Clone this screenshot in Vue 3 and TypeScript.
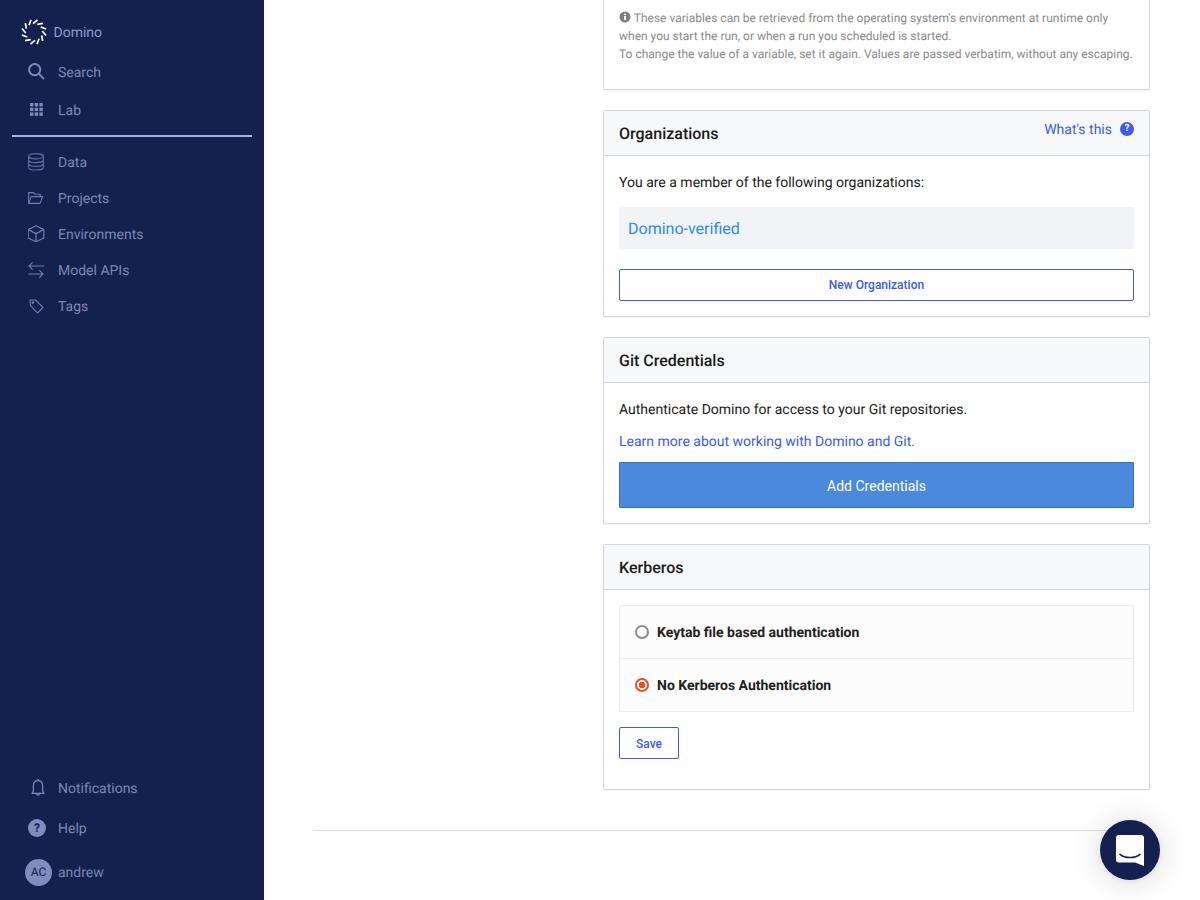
<script setup lang="ts">
const logoTicks = Array.from({ length: 12 }, (_, i) => i * 30);
</script>

<template>
  <div class="page">
    <aside class="sidebar">
      <div class="brand">
        <svg class="logo" width="26" height="26" viewBox="0 0 26 26">
          <g v-for="deg in logoTicks" :key="deg" :transform="`rotate(${deg} 13 13)`">
            <path d="M10 0.9 L8 6.3" stroke="#fff" stroke-width="1.7" fill="none" />
          </g>
        </svg>
        <span class="label">Domino</span>
      </div>
      <nav class="nav-top">
        <a class="nav-item tall">
          <svg width="18" height="18" viewBox="0 0 18 18" fill="none" stroke="#7c89bb" stroke-width="2">
            <circle cx="6.7" cy="6.7" r="5.6" />
            <path d="M10.8 10.8 L15.4 15.4" stroke-linecap="round" />
          </svg>
          <span class="label">Search</span>
        </a>
        <a class="nav-item tall">
          <svg width="18" height="18" viewBox="0 0 18 18" fill="#7c89bb">
            <rect x="2" y="2" width="3.4" height="3.4" />
            <rect x="6.7" y="2" width="3.4" height="3.4" />
            <rect x="11.4" y="2" width="3.4" height="3.4" />
            <rect x="2" y="6.7" width="3.4" height="3.4" />
            <rect x="6.7" y="6.7" width="3.4" height="3.4" />
            <rect x="11.4" y="6.7" width="3.4" height="3.4" />
            <rect x="2" y="11.4" width="3.4" height="3.4" />
            <rect x="6.7" y="11.4" width="3.4" height="3.4" />
            <rect x="11.4" y="11.4" width="3.4" height="3.4" />
          </svg>
          <span class="label">Lab</span>
        </a>
      </nav>
      <div class="nav-rule"></div>
      <nav class="nav-main">
        <a class="nav-item">
          <svg width="18" height="18" viewBox="0 0 18 18" fill="none" stroke="#5f6da3" stroke-width="1.2">
            <ellipse cx="8" cy="3.2" rx="7.4" ry="2.6" />
            <path d="M0.6 3.2 V14.4 C0.6 16 4 17 8 17 C12 17 15.4 16 15.4 14.4 V3.2" />
            <path d="M0.6 7 C0.6 8.6 4 9.6 8 9.6 C12 9.6 15.4 8.6 15.4 7" />
            <path d="M0.6 10.8 C0.6 12.4 4 13.4 8 13.4 C12 13.4 15.4 12.4 15.4 10.8" />
          </svg>
          <span class="label">Data</span>
        </a>
        <a class="nav-item">
          <svg width="18" height="18" viewBox="0 0 18 18" fill="none" stroke="#6f7cb0" stroke-width="1.1" stroke-linejoin="round">
            <path d="M0.6 14.4 V3.6 H5.6 L7 5.2 H12.2 V7.6" />
            <path d="M0.6 14.4 L3.2 7.6 H14.6 L12 14.4 Z" />
          </svg>
          <span class="label">Projects</span>
        </a>
        <a class="nav-item">
          <svg width="18" height="18" viewBox="0 0 18 18" fill="none" stroke="#6f7cb0" stroke-width="1.2" stroke-linejoin="round">
            <path d="M8 0.8 L15.8 4.6 V13 L8 16.8 L0.2 13 V4.6 Z" />
            <path d="M0.2 4.6 L8 8.6 L15.8 4.6 M8 8.6 V16.8" />
          </svg>
          <span class="label">Environments</span>
        </a>
        <a class="nav-item">
          <svg width="18" height="18" viewBox="0 0 18 18" fill="none" stroke="#6f7cb0" stroke-width="1.1">
            <path d="M16 5 H1 M4.6 1.4 L1 5 L4.6 8.6" />
            <path d="M0.4 13 H15 M11.4 9.4 L15 13 L11.4 16.6" />
          </svg>
          <span class="label">Model APIs</span>
        </a>
        <a class="nav-item">
          <svg width="18" height="18" viewBox="0 0 18 18" fill="none" stroke="#6f7cb0" stroke-width="1.1" stroke-linejoin="round">
            <path d="M2 3 H7.6 L15 10.4 L9.6 15.8 L2.4 8.6 Z" />
            <circle cx="4.8" cy="5.6" r="0.8" />
          </svg>
          <span class="label">Tags</span>
        </a>
      </nav>
      <div class="nav-bottom">
        <a class="nav-item notif">
          <svg width="18" height="20" viewBox="0 0 18 20" fill="none" stroke="#7c89bb" stroke-width="1.2" stroke-linejoin="round">
            <path d="M10 2.6 C6.8 2.6 5.4 5 5.4 7.6 V13 L4 15.4 H16 L14.6 13 V7.6 C14.6 5 13.2 2.6 10 2.6 Z" />
            <path d="M10 1 V2.6 M8.4 15.6 C8.4 17.6 11.6 17.6 11.6 15.6" />
          </svg>
          <span class="label">Notifications</span>
        </a>
        <a class="nav-item help">
          <span class="help-dot">?</span>
          <span class="label">Help</span>
        </a>
        <a class="nav-item user">
          <span class="avatar">AC</span>
          <span class="label">andrew</span>
        </a>
      </div>
    </aside>

    <main class="main">
      <div class="column">
        <section class="card card-cut">
          <div class="card-body env-note">
            <p>
              <svg class="info" width="12" height="12" viewBox="0 0 12 12">
                <circle cx="6" cy="6" r="5.5" fill="#808080" />
                <rect x="5.1" y="5" width="1.8" height="4" fill="#fff" />
                <rect x="5.1" y="2.6" width="1.8" height="1.6" fill="#fff" />
              </svg>
              These variables can be retrieved from the operating system's environment at runtime only
              when you start the run, or when a run you scheduled is started.
            </p>
            <p class="env-last">To change the value of a variable, set it again. Values are passed verbatim, without any escaping.</p>
          </div>
        </section>

        <section class="card">
          <header class="card-head">
            <h3>Organizations</h3>
            <a class="whats-this">
              <span class="label">What's this</span>
              <span class="q-dot">?</span>
            </a>
          </header>
          <div class="card-body">
            <p class="lead">You are a member of the following organizations:</p>
            <div class="org-row"><a>Domino-verified</a></div>
            <button class="btn-outline wide" type="button">New Organization</button>
          </div>
        </section>

        <section class="card">
          <header class="card-head">
            <h3>Git Credentials</h3>
          </header>
          <div class="card-body git">
            <p class="lead">Authenticate Domino for access to your Git repositories.</p>
            <a class="learn">Learn more about working with Domino and Git.</a>
            <button class="btn-solid" type="button">Add Credentials</button>
          </div>
        </section>

        <section class="card last">
          <header class="card-head">
            <h3>Kerberos</h3>
          </header>
          <div class="card-body kerberos">
            <div class="radio-group">
              <label class="radio-row">
                <span class="radio"></span>
                <span class="label">Keytab file based authentication</span>
              </label>
              <label class="radio-row">
                <span class="radio on"></span>
                <span class="label">No Kerberos Authentication</span>
              </label>
            </div>
            <button class="btn-outline save" type="button">Save</button>
          </div>
        </section>
      </div>
      <hr class="footer-rule" />
    </main>

    <button class="chat" type="button" aria-label="Chat">
      <svg width="28" height="31" viewBox="0 0 28 31">
        <path d="M3 0 H25 A3 3 0 0 1 28 3 V31 L19 27.6 H3 A3 3 0 0 1 0 24.6 V3 A3 3 0 0 1 3 0 Z" fill="#fff" />
        <path d="M4 19.4 C9 23.6 19 23.6 24 19.4" fill="none" stroke="#14214f" stroke-width="1.6" stroke-linecap="round" />
      </svg>
    </button>
  </div>
</template>

<style scoped>
.page {
  display: flex;
  height: 900px;
  overflow: hidden;
  font-family: Roboto, "Liberation Sans", sans-serif;
  color: #1a1a1a;
  background: #fff;
  text-rendering: geometricPrecision;
}

.label {
  padding-top: 2px;
}

.sidebar {
  flex: 0 0 264px;
  display: flex;
  flex-direction: column;
  background: #14214f;
  color: #7c87b2;
  font-size: 14px;
}

.brand {
  display: flex;
  align-items: center;
  gap: 7px;
  height: 32px;
  margin-top: 16px;
  padding-left: 20.5px;
  color: #8f9bcb;
  margin-bottom: 5px;
}

.nav-top {
  display: flex;
  flex-direction: column;
}

.nav-item {
  display: flex;
  align-items: center;
  height: 36px;
  padding-left: 28px;
  gap: 12px;
}

.nav-item svg {
  flex: none;
}

.nav-item.tall {
  height: 38px;
}

.nav-rule {
  height: 2px;
  margin: 6px 12px 7px;
  background: #a4b1e4;
}

.nav-main {
  display: flex;
  flex-direction: column;
}

.nav-bottom {
  margin-top: auto;
  display: flex;
  flex-direction: column;
  padding-bottom: 4px;
}

.nav-item.notif {
  height: 40px;
}

.nav-item.help {
  height: 40px;
}

.help-dot {
  flex: none;
  width: 18px;
  height: 18px;
  border-radius: 50%;
  background: #7f8cbe;
  color: #14214f;
  font-size: 12px;
  font-weight: 700;
  line-height: 18px;
  text-align: center;
}

.nav-item.user {
  height: 48px;
  padding-left: 25px;
  gap: 6px;
}

.avatar {
  flex: none;
  width: 27px;
  height: 27px;
  border-radius: 50%;
  background: #7f8cbe;
  color: #14214f;
  font-size: 12px;
  line-height: 27px;
  text-align: center;
}

.main {
  flex: 1;
  min-width: 0;
  padding: 0 50px;
}

.column {
  width: 547px;
  margin-left: 289px;
  display: flex;
  flex-direction: column;
  gap: 20px;
}

.card {
  border: 1px solid #d2d5db;
  border-radius: 2px;
  box-shadow: 0 1px 1px rgba(0, 0, 0, 0.06);
  background: #fff;
}

.card-cut {
  height: 90px;
  box-sizing: border-box;
  border-top: 0;
  border-radius: 0 0 2px 2px;
}

.card.last {
  height: 246px;
  box-sizing: border-box;
}

.card-head {
  display: flex;
  justify-content: space-between;
  height: 44px;
  padding: 0 15px;
  background: #f7f8fa;
  border-bottom: 1px solid #d2d5db;
}

.card-head h3 {
  margin: 0;
  font-size: 16px;
  font-weight: 500;
  line-height: 46px;
  color: #1a1a1a;
}

.whats-this {
  display: flex;
  align-items: center;
  gap: 8px;
  height: 36px;
  color: #3d5af1;
  font-size: 14px;
}

.q-dot {
  width: 14px;
  height: 14px;
  border-radius: 50%;
  background: #3d5af1;
  color: #fff;
  font-size: 10px;
  font-weight: 700;
  line-height: 14px;
  text-align: center;
}

.card-body {
  padding: 0 15px 15px;
}

.env-note {
  padding-top: 8.8px;
  font-size: 12px;
  line-height: 18.5px;
  color: #8a8a8a;
}

.env-note p {
  margin: 0;
}

.env-note .env-last {
  margin-top: -1px;
}

.info {
  vertical-align: -1px;
}

.lead {
  margin: 0;
  padding-top: 17px;
  font-size: 14px;
  line-height: 20px;
}

.org-row {
  display: flex;
  align-items: center;
  height: 42px;
  margin-top: 14px;
  padding-left: 9px;
  background: #f2f3f6;
  font-size: 16px;
  color: #2b8cf0;
}

.btn-outline {
  display: block;
  height: 32px;
  border: 1px solid #3d5af1;
  border-radius: 2px;
  background: #fff;
  color: #3d5af1;
  font-family: inherit;
  font-size: 12px;
  font-weight: 500;
  padding: 0;
}

.btn-outline.wide {
  width: 100%;
  margin-top: 20px;
}

.learn {
  display: block;
  margin-top: 12px;
  font-size: 14px;
  line-height: 20px;
  color: #3d5af1;
}

.btn-solid {
  display: block;
  width: 100%;
  height: 46px;
  margin-top: 10px;
  border: 1px solid #3a6fb5;
  border-radius: 1px;
  background: #4a89dc;
  color: #fff;
  font-family: inherit;
  font-size: 14px;
  padding: 2px 0 0;
}

.kerberos {
  padding-top: 15px;
}

.radio-group {
  border: 1px solid #ececec;
  border-radius: 2px;
  background: #fcfcfc;
}

.radio-row {
  display: flex;
  align-items: center;
  gap: 8px;
  height: 52px;
  padding-left: 15px;
  font-size: 14px;
  font-weight: 700;
  color: #222;
}

.radio-row + .radio-row {
  border-top: 1px solid #ececec;
}

.radio {
  flex: none;
  box-sizing: border-box;
  width: 14px;
  height: 14px;
  border: 2px solid #8b8b9e;
  border-radius: 50%;
  background: #fff;
}

.radio.on {
  border-color: #e8501f;
  background: radial-gradient(circle, #e8501f 0 3px, #fff 3.5px);
}

.btn-outline.save {
  width: 60px;
  margin-top: 15px;
  padding-top: 2px;
}

.footer-rule {
  width: 836px;
  margin: 40px 0 0;
  border: 0;
  border-top: 1px solid #dcdcdc;
}

.chat {
  position: absolute;
  left: 1100px;
  top: 820px;
  display: flex;
  align-items: center;
  justify-content: center;
  width: 60px;
  height: 60px;
  padding: 0;
  border: 0;
  border-radius: 50%;
  background: #14214f;
  box-shadow: 0 1px 6px rgba(0, 0, 0, 0.06), 0 2px 32px rgba(0, 0, 0, 0.16);
}
</style>

<style>
html,
body {
  margin: 0;
  overflow: hidden;
}
</style>
